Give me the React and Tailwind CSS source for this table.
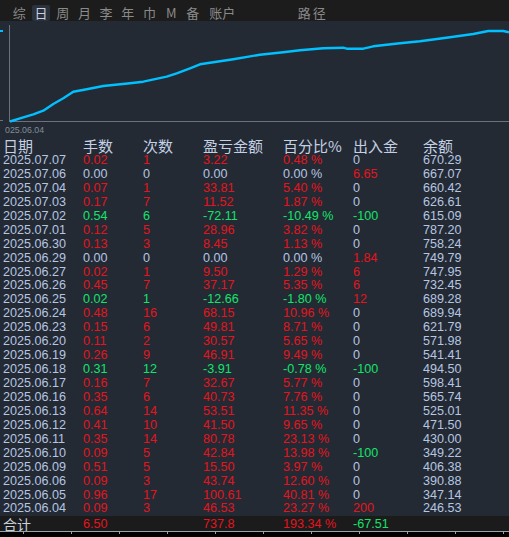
import React from 'react';

const R = 'text-[#e5141e]';
const G = 'text-[#12e46c]';
const N = 'text-[#b6c6e2]';

// [date, lots, count, pnl, pct, flow, balance, tone, flowTone]
const rows = [
  ['2025.07.07', '0.02', '1', '3.22', '0.48 %', '0', '670.29', 'r', 'n'],
  ['2025.07.06', '0.00', '0', '0.00', '0.00 %', '6.65', '667.07', 'n', 'r'],
  ['2025.07.04', '0.07', '1', '33.81', '5.40 %', '0', '660.42', 'r', 'n'],
  ['2025.07.03', '0.17', '7', '11.52', '1.87 %', '0', '626.61', 'r', 'n'],
  ['2025.07.02', '0.54', '6', '-72.11', '-10.49 %', '-100', '615.09', 'g', 'g'],
  ['2025.07.01', '0.12', '5', '28.96', '3.82 %', '0', '787.20', 'r', 'n'],
  ['2025.06.30', '0.13', '3', '8.45', '1.13 %', '0', '758.24', 'r', 'n'],
  ['2025.06.29', '0.00', '0', '0.00', '0.00 %', '1.84', '749.79', 'n', 'r'],
  ['2025.06.27', '0.02', '1', '9.50', '1.29 %', '6', '747.95', 'r', 'r'],
  ['2025.06.26', '0.45', '7', '37.17', '5.35 %', '6', '732.45', 'r', 'r'],
  ['2025.06.25', '0.02', '1', '-12.66', '-1.80 %', '12', '689.28', 'g', 'r'],
  ['2025.06.24', '0.48', '16', '68.15', '10.96 %', '0', '689.94', 'r', 'n'],
  ['2025.06.23', '0.15', '6', '49.81', '8.71 %', '0', '621.79', 'r', 'n'],
  ['2025.06.20', '0.11', '2', '30.57', '5.65 %', '0', '571.98', 'r', 'n'],
  ['2025.06.19', '0.26', '9', '46.91', '9.49 %', '0', '541.41', 'r', 'n'],
  ['2025.06.18', '0.31', '12', '-3.91', '-0.78 %', '-100', '494.50', 'g', 'g'],
  ['2025.06.17', '0.16', '7', '32.67', '5.77 %', '0', '598.41', 'r', 'n'],
  ['2025.06.16', '0.35', '6', '40.73', '7.76 %', '0', '565.74', 'r', 'n'],
  ['2025.06.13', '0.64', '14', '53.51', '11.35 %', '0', '525.01', 'r', 'n'],
  ['2025.06.12', '0.41', '10', '41.50', '9.65 %', '0', '471.50', 'r', 'n'],
  ['2025.06.11', '0.35', '14', '80.78', '23.13 %', '0', '430.00', 'r', 'n'],
  ['2025.06.10', '0.09', '5', '42.84', '13.98 %', '-100', '349.22', 'r', 'g'],
  ['2025.06.09', '0.51', '5', '15.50', '3.97 %', '0', '406.38', 'r', 'n'],
  ['2025.06.06', '0.09', '3', '43.74', '12.60 %', '0', '390.88', 'r', 'n'],
  ['2025.06.05', '0.96', '17', '100.61', '40.81 %', '0', '347.14', 'r', 'n'],
  ['2025.06.04', '0.09', '3', '46.53', '23.27 %', '200', '246.53', 'r', 'r'],
];

const tone = (t) => (t === 'r' ? R : t === 'g' ? G : N);

const tabs = [
  ['综', 'w-[21.7px]'],
  ['日', 'w-[21.7px]', true],
  ['周', 'w-[21.7px]'],
  ['月', 'w-[21.7px]'],
  ['李', 'w-[21.7px]'],
  ['年', 'w-[21.7px]'],
  ['巾', 'w-[21.7px]'],
  ['M', 'w-[21.7px]'],
  ['备', 'w-[21.7px]'],
  ['账户', 'w-[37px]'],
];

const curve = [
  [10, 121.5], [20, 118.3], [33.3, 114.3], [43.3, 110.7], [53.3, 104], [63.3, 98.3],
  [73.3, 91.7], [86.7, 89.3], [103.3, 86], [130, 83.3], [143.3, 81.7], [166.7, 76.7],
  [176.7, 73.3], [190, 68.3], [200, 64.3], [213.3, 62.3], [233.3, 59.3], [260, 54.7],
  [283.3, 52.3], [300, 50.3], [323.3, 48.3], [343.3, 47.7], [346.7, 48.7], [363.3, 48.7],
  [373.3, 46.3], [400, 43.3], [420, 41.3], [450, 37.3], [473.3, 34], [488.3, 31],
  [503.3, 31], [509, 32.3],
]
  .map(([x, y]) => `${x},${y - 21}`)
  .join(' ');

const ticks = [23, 71, 119, 167, 215, 263, 311, 359, 407, 455, 503];

const cols = 'grid grid-cols-[80px_60px_60px_80px_70px_70px_1fr] pl-[3px]';

export default function App() {
  return (
    <div className="w-[509px] h-[537px] overflow-hidden bg-black flex flex-col font-['Liberation_Sans','Noto_Sans_CJK_SC',sans-serif]">
      {/* period tabs */}
      <div className="h-[21px] shrink-0 bg-[#1c1c1c] flex items-center pl-[8.5px] text-[13px] text-[#8a8a8a] font-['Noto_Sans_CJK_SC',sans-serif]">
        {tabs.map(([label, w, active]) => (
          <div key={label} className={`${w} flex justify-center`}>
            <span
              className={
                active
                  ? 'bg-[#2b323c] text-[#c4d2e6] px-[2.5px] leading-[16px] mt-[4px] rounded-[2px]'
                  : 'leading-[16px] mt-[4px]'
              }
            >
              {label}
            </span>
          </div>
        ))}
        <span className="ml-[57px] leading-[16px] mt-[4px] tracking-[2px]">路径</span>
      </div>

      <div className="flex-1 flex flex-col bg-[#232a33] min-h-0">
        {/* equity curve */}
        <svg width="509" height="102" className="block shrink-0">
          <line x1="9.5" y1="4" x2="9.5" y2="101" stroke="#6c7279" strokeWidth="1" />
          <line x1="9" y1="100.5" x2="509" y2="100.5" stroke="#6c7279" strokeWidth="1" />
          <line x1="0" y1="99.5" x2="3" y2="99.5" stroke="#6c7279" strokeWidth="1" />
          <line x1="0" y1="10" x2="3" y2="10" stroke="#00c0ff" strokeWidth="2" />
          <polyline points={curve} fill="none" stroke="#00c0ff" strokeWidth="2.4" strokeLinejoin="round" />
        </svg>
        <div className="h-[14px] shrink-0 pl-[5px] text-[8.8px] leading-[14px] text-[#808c9a]">025.06.04</div>

        {/* header */}
        <div className={`${cols} h-[17px] shrink-0 pt-[1px] text-[15px] leading-[15px] text-[#c4d0e4] font-['Noto_Sans_CJK_SC',sans-serif]`}>
          <span>日期</span>
          <span>手数</span>
          <span>次数</span>
          <span>盈亏金额</span>
          <span>百分比%</span>
          <span>出入金</span>
          <span>余额</span>
        </div>

        {/* daily rows */}
        <div className="flex flex-col text-[12.6px]">
          {rows.map((r) => (
            <div key={r[0]} className={`${cols} h-[13.94px] leading-[13.94px] whitespace-nowrap`}>
              <span className={N}>{r[0]}</span>
              <span className={tone(r[7])}>{r[1]}</span>
              <span className={tone(r[7])}>{r[2]}</span>
              <span className={tone(r[7])}>{r[3]}</span>
              <span className={tone(r[7])}>{r[4]}</span>
              <span className={tone(r[8])}>{r[5]}</span>
              <span className={N}>{r[6]}</span>
            </div>
          ))}
        </div>

        {/* totals */}
        <div className={`${cols} flex-1 min-h-0 overflow-hidden bg-[#1b1b1b] pt-[1px] text-[12.6px] leading-[14px] whitespace-nowrap`}>
          <span className="text-[#c8d0dc] text-[14px] font-['Noto_Sans_CJK_SC',sans-serif] leading-[14px]">合计</span>
          <span className={R}>6.50</span>
          <span />
          <span className={R}>737.8</span>
          <span className={R}>193.34 %</span>
          <span className={G}>-67.51</span>
          <span />
        </div>
      </div>

      {/* bottom scale */}
      <div className="h-[6px] shrink-0 border-t border-[#9aa2aa] bg-black">
        <svg width="509" height="5" className="block">
          {ticks.map((x) => (
            <line key={x} x1={x + 0.5} y1="0" x2={x + 0.5} y2="2" stroke="#9aa2aa" strokeWidth="1" />
          ))}
        </svg>
      </div>
    </div>
  );
}
